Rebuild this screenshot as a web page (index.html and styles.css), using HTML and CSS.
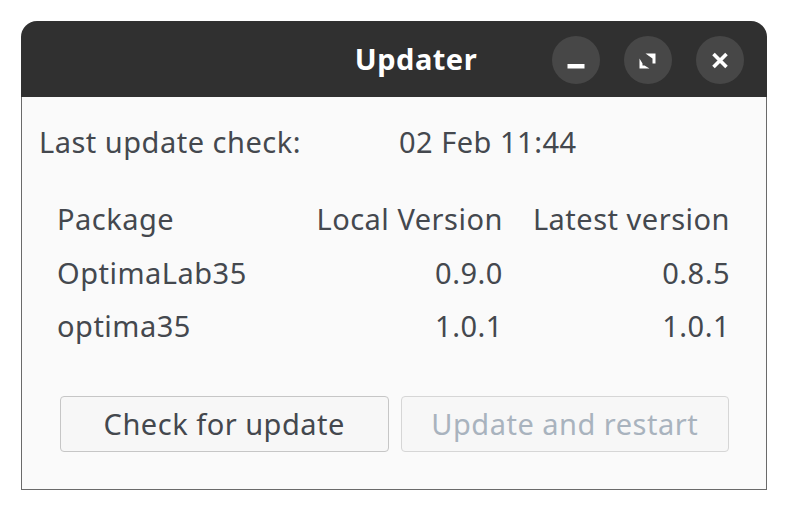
FILE: index.html
```html
<!DOCTYPE html>
<html>
<head>
<meta charset="utf-8">
<link rel="stylesheet" href="styles.css">
</head>
<body>
<div class="window">
  <header class="titlebar">
    <div class="title">Updater</div>
    <div class="controls">
      <button class="ctl" aria-label="Minimize">
        <svg width="48" height="48" viewBox="0 0 48 48"><rect x="15.5" y="28" width="17" height="4.5" fill="#fff"/></svg>
      </button>
      <button class="ctl" aria-label="Restore">
        <svg width="48" height="48" viewBox="0 0 48 48"><path d="M21.5 17.5 H31.5 V27.5 H28.5 V22.5 Z" fill="#fff"/><path d="M15.5 22.5 V32.5 H25.5 L20.5 29.5 H18.5 V27.5 Z" fill="#fff"/></svg>
      </button>
      <button class="ctl" aria-label="Close">
        <svg width="48" height="48" viewBox="0 0 48 48"><path d="M17.5 18 L30.5 31 M30.5 18 L17.5 31" stroke="#fff" stroke-width="3.6" fill="none"/></svg>
      </button>
    </div>
  </header>
  <main class="content">
    <div class="last-check">
      <span>Last update check:</span>
      <span>02 Feb 11:44</span>
    </div>
    <div class="packages">
      <span>Package</span>
      <span class="num">Local Version</span>
      <span class="num">Latest version</span>
      <span>OptimaLab35</span>
      <span class="num">0.9.0</span>
      <span class="num">0.8.5</span>
      <span>optima35</span>
      <span class="num">1.0.1</span>
      <span class="num">1.0.1</span>
    </div>
    <div class="actions">
      <button class="btn">Check for update</button>
      <button class="btn" disabled>Update and restart</button>
    </div>
  </main>
</div>
</body>
</html>
```
FILE: styles.css
```css
body {
  margin: 0;
  background: #ffffff;
  font-family: "Noto Sans", "Open Sans", sans-serif;
}

.window {
  margin: 21px 0 0 21px;
  width: 746px;
}

.titlebar {
  height: 76px;
  background: #303030;
  border-radius: 16px 16px 0 0;
  display: flex;
  align-items: center;
}

.title {
  flex: 1;
  padding-left: 259px;
  text-align: center;
  color: #ffffff;
  font-weight: 700;
  font-size: 29px;
  letter-spacing: 0.5px;
  line-height: 38px;
}

.controls {
  display: flex;
  gap: 24px;
  padding: 2px 23px 0 0;
}

.ctl {
  width: 48px;
  height: 48px;
  border-radius: 50%;
  border: 0;
  padding: 0;
  background: #474747;
  display: flex;
  align-items: center;
  justify-content: center;
}

.ctl svg {
  display: block;
}

.content {
  background: #fafafa;
  border: 1px solid #6a6a6a;
  border-top: 0;
  padding: 26px 17px 37px;
  font-size: 29px;
  letter-spacing: 0.5px;
  line-height: 38px;
  color: #44484e;
}

.last-check {
  display: grid;
  grid-template-columns: 360px auto;
}

.packages {
  display: grid;
  grid-template-columns: 1fr auto auto;
  column-gap: 30px;
  row-gap: 15.5px;
  margin: 39px 19px 0 18px;
}

.num {
  text-align: right;
}

.actions {
  display: grid;
  grid-template-columns: 1fr 1fr;
  gap: 12px;
  margin: 51px 20px 0 21px;
}

.btn {
  height: 56px;
  border: 1px solid #c6c6c6;
  border-radius: 4px;
  background: #f7f7f7;
  font-family: "Noto Sans", "Open Sans", sans-serif;
  font-size: 29px;
  letter-spacing: 0.5px;
  line-height: 38px;
  color: #44484e;
  padding: 0;
}

.btn:disabled {
  color: #a9b3be;
  border-color: #d6d6d6;
}
```
